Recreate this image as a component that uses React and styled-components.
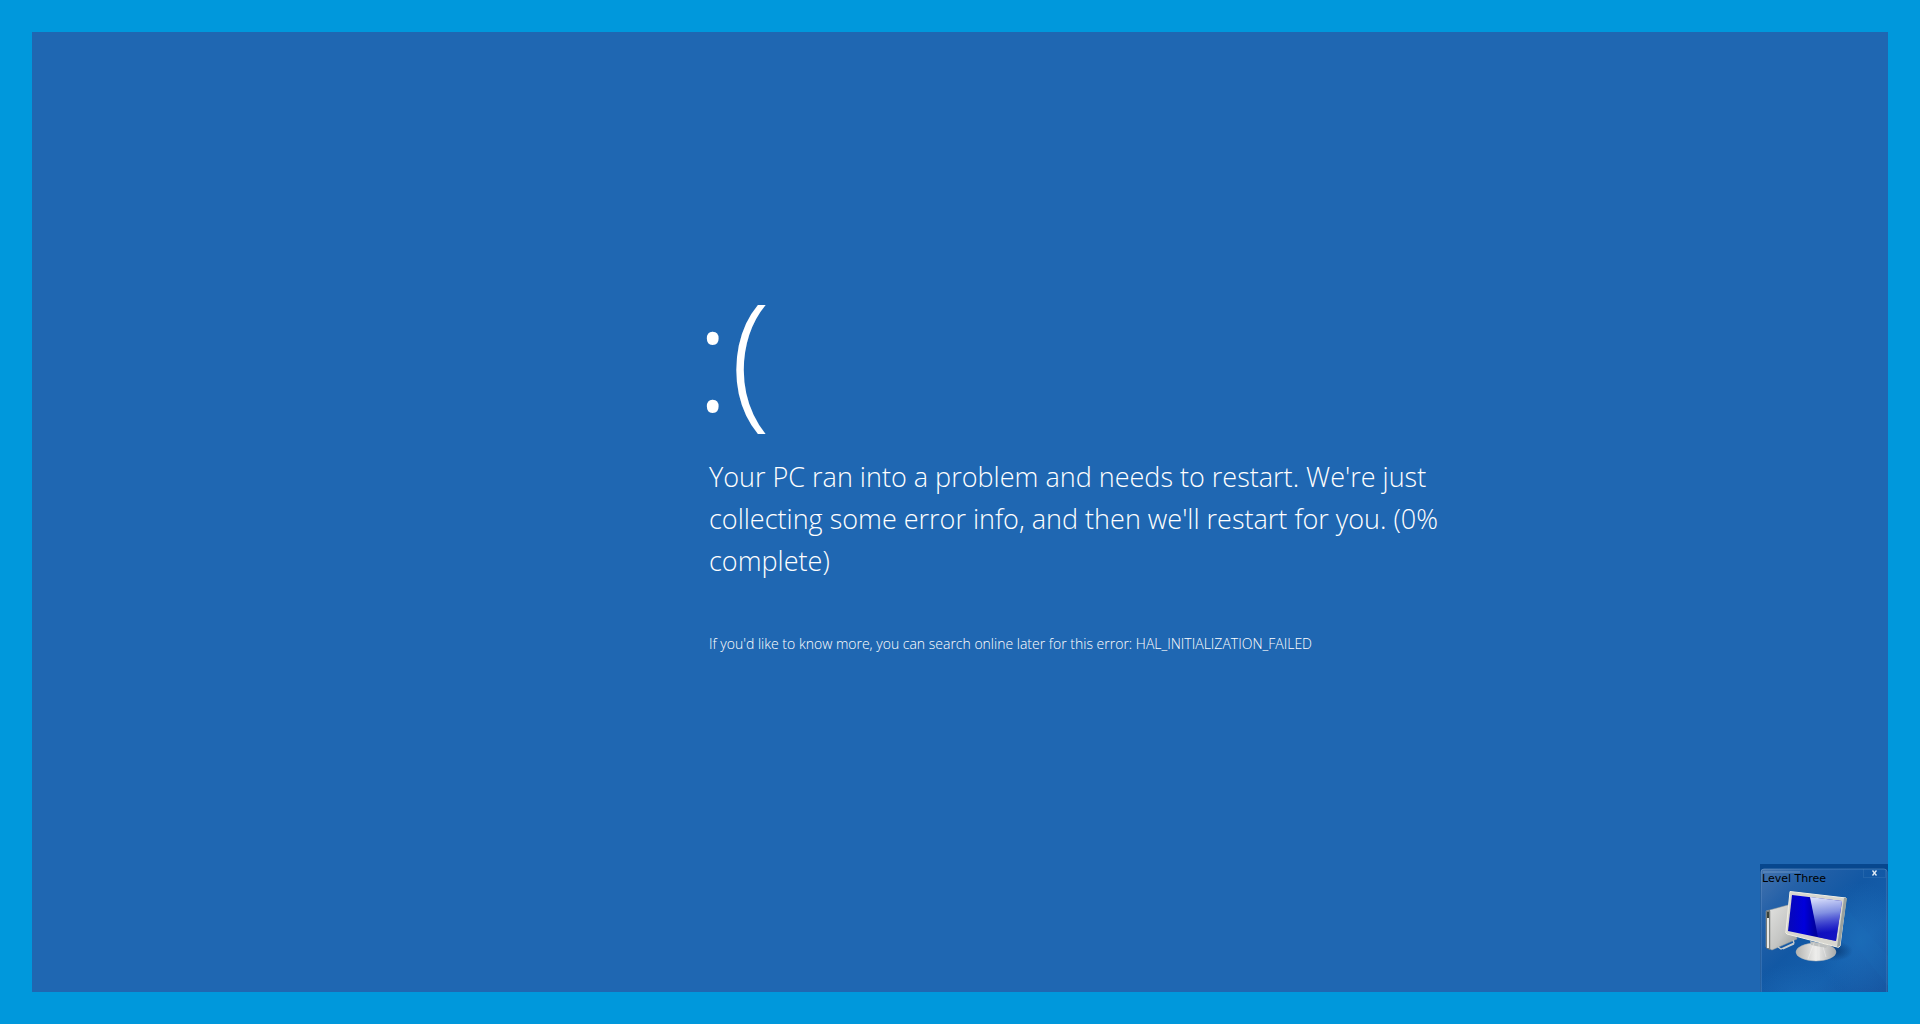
import React from "react";
import styled, { createGlobalStyle } from "styled-components";

const GlobalStyle = createGlobalStyle`
  *, *::before, *::after { box-sizing: border-box; }
  body {
    margin: 0;
    background: #0098dc;
    font-family: "Segoe UI Light", "Open Sans", "Noto Sans", sans-serif;
  }
`;

const Desktop = styled.div`
  display: flex;
  min-height: 100vh;
  padding: 32px;
  background: #0098dc;
`;

const CrashScreen = styled.main`
  flex: 1;
  display: grid;
  grid-template-columns: 677fr 1179fr;
  grid-template-rows: 1fr auto;
  background: #1f67b2;
  color: #fff;
  font-weight: 300;
`;

const Message = styled.section`
  grid-column: 2;
  display: flex;
  flex-direction: column;
  padding-top: 242px;
  max-width: 744px;
`;

const Face = styled.h1`
  margin: 0 0 22px -14px;
  font-size: 148px;
  line-height: 160px;
  font-weight: 300;
`;

const Summary = styled.p`
  margin: 0;
  font-size: 27px;
  line-height: 42px;
`;

const Detail = styled.p`
  margin: 52px 0 0;
  font-size: 14px;
  line-height: 20px;
`;

const Window = styled.aside`
  grid-column: 2;
  justify-self: end;
  position: relative;
  width: 128px;
  height: 128px;
  overflow: hidden;
  color: #000;
`;

const Scene = styled.svg`
  display: block;
  width: 100%;
  height: 100%;
`;

const Title = styled.h2`
  position: absolute;
  top: 8px;
  left: 2px;
  margin: 0;
  font: 400 11px/14px "DejaVu Sans", sans-serif;
`;

const Close = styled.button`
  position: absolute;
  top: 5px;
  right: 2px;
  width: 23px;
  height: 9px;
  padding: 0;
  border: 1px solid rgba(70, 130, 190, 0.3);
  border-top: 0;
  background: transparent;
  display: flex;
  align-items: center;
  justify-content: center;
`;

function ComputerScene() {
  return (
    <Scene viewBox="0 0 128 128" aria-hidden="true">
      <defs>
        <linearGradient id="bg" x1="0" y1="0" x2="1" y2="1">
          <stop offset="0" stopColor="#4574ae" />
          <stop offset=".2" stopColor="#2561a8" />
          <stop offset=".45" stopColor="#1258a4" />
          <stop offset=".7" stopColor="#1560ad" />
          <stop offset="1" stopColor="#1757a2" />
        </linearGradient>
        <radialGradient id="glow">
          <stop offset="0" stopColor="#2478c4" stopOpacity=".45" />
          <stop offset="1" stopColor="#2478c4" stopOpacity="0" />
        </radialGradient>
        <linearGradient id="edge">
          <stop offset="0" stopColor="#7ba4d3" />
          <stop offset=".5" stopColor="#5c91c8" />
          <stop offset="1" stopColor="#6495c8" />
        </linearGradient>
        <linearGradient id="screen">
          <stop offset="0" stopColor="#0708b8" />
          <stop offset=".3" stopColor="#0000dc" />
          <stop offset=".5" stopColor="#0000a0" />
          <stop offset="1" stopColor="#1111b5" />
        </linearGradient>
        <linearGradient id="shine" x1="0" y1="0" x2=".1" y2="1">
          <stop offset="0" stopColor="#e6ebff" />
          <stop offset=".4" stopColor="#8f9fe8" stopOpacity=".9" />
          <stop offset=".85" stopColor="#1717d0" stopOpacity=".6" />
        </linearGradient>
        <linearGradient id="metal">
          <stop offset="0" stopColor="#b3b3b0" />
          <stop offset=".5" stopColor="#eeeeec" />
          <stop offset="1" stopColor="#a6a9aa" />
        </linearGradient>
        <linearGradient id="side" x1="0" y1="0" x2="1" y2="1">
          <stop offset="0" stopColor="#e4e4e2" />
          <stop offset=".6" stopColor="#c4c5c3" />
          <stop offset="1" stopColor="#929794" />
        </linearGradient>
        <radialGradient id="shadow">
          <stop offset="0" stopColor="#06366f" stopOpacity=".8" />
          <stop offset="1" stopColor="#06366f" stopOpacity="0" />
        </radialGradient>
      </defs>
      <rect width="128" height="128" fill="#07478e" />
      <path d="M1 128V8q0-3 3-3h120q3 0 3 3v120z" fill="url(#bg)" />
      <ellipse cx="100" cy="75" rx="44" ry="57" fill="url(#glow)" />
      <ellipse cx="35" cy="128" rx="48" ry="28" fill="url(#glow)" opacity=".55" />
      <path d="M79 36L128 92v30L70 49z" fill="#1b70bf" opacity=".15" />
      <path d="M1 128V8q0-3 3-3h120q3 0 3 3v120" fill="none" stroke="url(#edge)" strokeWidth=".8" opacity=".65" />
      <path d="M3 8h37" stroke="#729bca" strokeWidth="2" opacity=".4" />
      <ellipse cx="74" cy="87" rx="19" ry="10" fill="url(#shadow)" />
      <path d="M6 47L28 41 37 75 12 86 6 83z" fill="url(#side)" stroke="#9c9e9c" strokeWidth=".5" />
      <path d="M6 47l4-1v40l-4-2z" fill="#777b79" />
      <path d="M8 54v30" stroke="#f5f5f2" strokeWidth="1.8" />
      <path d="M7 48h2v6H7z" fill="#39423b" />
      <path d="M10 47v38" stroke="#8b8f8c" strokeWidth=".6" />
      <path d="M18 83l3 2 13-6-1-3M23 85l11-5" fill="none" stroke="#c6ccce" strokeWidth="1.3" />
      <ellipse cx="56" cy="88" rx="20" ry="9" fill="url(#metal)" stroke="#bbbdbc" strokeWidth=".5" />
      <path d="M50 77l18 4-2 3-15-3z" fill="#bec1c0" />
      <path d="M54 79l-6 16M59 80v16M63 83l3 10" stroke="#fff" strokeWidth="1" opacity=".35" />
      <path d="M30 27.5L86 34 80 82q-1 2-3 1L27 70q-2-1-1-3z" fill="#d7d6cf" stroke="#f2f0e6" strokeWidth="1" />
      <path d="M84 34l3 0-7 48-3 1z" fill="#99a19e" />
      <path d="M32 31L82 37 76 77 28 67z" fill="url(#screen)" />
      <path d="M50 33L82 37 76 77 58 73z" fill="url(#shine)" />
    </Scene>
  );
}

export default function App() {
  return (
    <>
      <GlobalStyle />
      <Desktop>
        <CrashScreen>
          <Message>
            <Face>:(</Face>
            <Summary>
              Your PC ran into a problem and needs to restart. We're just
              collecting some error info, and then we'll restart for you. (0% complete)
            </Summary>
            <Detail>
              If you'd like to know more, you can search online later for this error: HAL_INITIALIZATION_FAILED
            </Detail>
          </Message>
          <Window>
            <ComputerScene />
            <Title>Level Three</Title>
            <Close aria-label="Close">
              <svg width="5" height="6" viewBox="0 0 5 6" aria-hidden="true">
                <path d="M.5.5l4 5m0-5l-4 5" stroke="#e4edf6" strokeWidth="1.3" />
              </svg>
            </Close>
          </Window>
        </CrashScreen>
      </Desktop>
    </>
  );
}
